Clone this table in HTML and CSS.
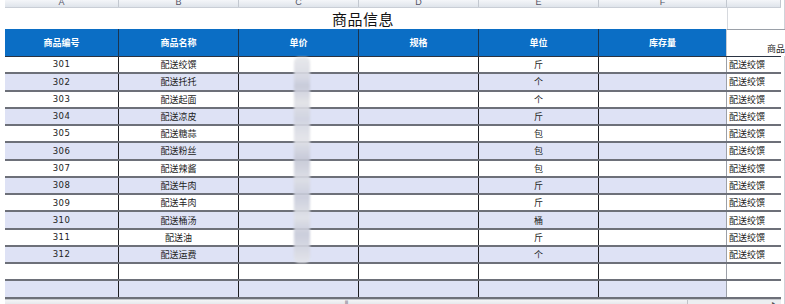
FILE: index.html
```html
<!DOCTYPE html>
<html lang="zh-CN">
<head>
<meta charset="utf-8">
<title>商品信息</title>
<link rel="stylesheet" href="styles.css">
</head>
<body>
<div class="sheet">
  <div class="letters">
    <span>A</span><span>B</span><span>C</span><span>D</span><span>E</span><span>F</span><span></span>
  </div>
  <div class="title-row">
    <div class="title">商品信息</div>
    <div class="g-cell"></div>
  </div>
  <div class="head-row">
    <div class="hc">商品编号</div>
    <div class="hc">商品名称</div>
    <div class="hc">单价</div>
    <div class="hc">规格</div>
    <div class="hc">单位</div>
    <div class="hc last">库存量</div>
    <div class="g-head">商品</div>
  </div>
  <div class="body">
    <div class="row"><div>301</div><div>配送绞馔</div><div></div><div></div><div>斤</div><div></div><div class="g">配送绞馔</div></div>
    <div class="row alt"><div>302</div><div>配送托托</div><div></div><div></div><div>个</div><div></div><div class="g">配送绞馔</div></div>
    <div class="row"><div>303</div><div>配送起面</div><div></div><div></div><div>个</div><div></div><div class="g">配送绞馔</div></div>
    <div class="row alt"><div>304</div><div>配送凉皮</div><div></div><div></div><div>斤</div><div></div><div class="g">配送绞馔</div></div>
    <div class="row"><div>305</div><div>配送糖蒜</div><div></div><div></div><div>包</div><div></div><div class="g">配送绞馔</div></div>
    <div class="row alt"><div>306</div><div>配送粉丝</div><div></div><div></div><div>包</div><div></div><div class="g">配送绞馔</div></div>
    <div class="row"><div>307</div><div>配送辣酱</div><div></div><div></div><div>包</div><div></div><div class="g">配送绞馔</div></div>
    <div class="row alt"><div>308</div><div>配送牛肉</div><div></div><div></div><div>斤</div><div></div><div class="g">配送绞馔</div></div>
    <div class="row"><div>309</div><div>配送羊肉</div><div></div><div></div><div>斤</div><div></div><div class="g">配送绞馔</div></div>
    <div class="row alt"><div>310</div><div>配送桶汤</div><div></div><div></div><div>桶</div><div></div><div class="g">配送绞馔</div></div>
    <div class="row"><div>311</div><div>配送油</div><div></div><div></div><div>斤</div><div></div><div class="g">配送绞馔</div></div>
    <div class="row alt"><div>312</div><div>配送运费</div><div></div><div></div><div>个</div><div></div><div class="g">配送绞馔</div></div>
    <div class="row"><div></div><div></div><div></div><div></div><div></div><div></div><div class="g"></div></div>
    <div class="row alt"><div></div><div></div><div></div><div></div><div></div><div></div><div class="g"></div></div>
    <div class="blot"></div>
  </div>
  <div class="hscroll">
    <div class="thumb"><span class="grip">|||</span></div>
    <div class="arrow">▸</div>
  </div>
</div>
</body>
</html>
```

FILE: styles.css
```css
* { box-sizing: border-box; }
html, body {
  margin: 0;
  padding: 0;
  width: 785px;
  height: 304px;
  overflow: hidden;
  background: #ffffff;
  font-family: "Noto Sans CJK SC", "Noto Sans", sans-serif;
  color: #222;
}
.sheet {
  width: 785px;
  height: 304px;
  padding-left: 5px;
  padding-right: 3px;
  border-right: 1px solid #cfd3da;
}
.letters, .title-row, .head-row, .row {
  display: grid;
  grid-template-columns: 114px 120px 120px 120px 120px 128px 1fr;
}
.letters {
  height: 8px;
  background: linear-gradient(#f4f6f9, #dfe4eb);
  border-bottom: 1px solid #c9ced6;
  overflow: hidden;
}
.letters span {
  border-right: 1px solid #c3c8d0;
  font-family: "Liberation Sans", sans-serif;
  font-size: 9px;
  line-height: 5px;
  color: #556;
  text-align: center;
  display: block;
}
.title-row {
  height: 21px;
  grid-template-columns: 722px 1fr;
}
.title {
  font-size: 15px;
  line-height: 21px;
  text-align: center;
  color: #111;
  padding-right: 6px;
  letter-spacing: 0.5px;
}
.g-cell { border-left: 1px solid #d6d9de; }
.head-row {
  height: 28px;
  border-bottom: 1px solid #2a3342;
}
.hc {
  background: #0b6ec5;
  color: #fff;
  font-size: 9px;
  font-weight: bold;
  display: flex;
  align-items: center;
  justify-content: center;
  border-right: 1px solid #1b3550;
  padding-bottom: 1px;
}
.hc.last { border-right: 1px solid #c8ccd3; }
.g-head {
  border-top: 1px solid #9aa0a8;
  background: #fff;
  font-size: 9px;
  display: flex;
  align-items: flex-end;
  justify-content: flex-end;
  padding-bottom: 1px;
  overflow: hidden;
  white-space: nowrap;
  margin-right: -4px;
}
.body { position: relative; }
.row {
  height: 17.27px;
  border-bottom: 2px solid #6d7079;
  font-size: 9px;
  background: #fff;
}
.row.alt { background: #dee2f5; }
.row > div {
  display: flex;
  align-items: center;
  justify-content: center;
  border-right: 1px solid #1e1e22;
  line-height: 1;
}
.row > div:first-child {
  font-family: "DejaVu Sans", "Noto Sans", sans-serif;
  font-size: 8.5px;
  letter-spacing: 0.4px;
}
.row > div:nth-child(6) { border-right: 1px solid #9ca0a8; }
.row > .g {
  background: #fff;
  justify-content: flex-start;
  padding-left: 2px;
  border-right: none;
  white-space: nowrap;
  overflow: hidden;
}
.blot {
  position: absolute;
  left: 289px;
  top: 0;
  width: 16px;
  height: 206px;
  border-radius: 5px;
  background: linear-gradient(#e6e7ea 0%, #d6d8e2 10%, #c6c9d8 14%, #e0e1e6 22%, #d0d3e0 30%, #e2e3e8 40%, #c4c7d6 50%, #dcdee5 60%, #c8cbda 68%, #e0e2e7 78%, #c6c9d8 86%, #e4e5ea 100%);
  filter: blur(1px);
  opacity: 0.9;
}
.hscroll {
  height: 6px;
  background: #eceef1;
  border-top: 1px solid #c4c7cc;
  display: flex;
  position: relative;
}
.thumb {
  width: 683px;
  height: 100%;
  background: linear-gradient(#f4f5f7, #e3e5e9);
  border-right: 1px solid #c0c3c8;
  display: flex;
  justify-content: center;
  overflow: hidden;
}
.grip {
  font-size: 6px;
  line-height: 6px;
  color: #6a6e76;
  letter-spacing: -1px;
  font-family: "DejaVu Sans", sans-serif;
}
.arrow {
  margin-left: auto;
  margin-right: 6px;
  font-size: 6px;
  line-height: 5px;
  color: #555;
}
```
